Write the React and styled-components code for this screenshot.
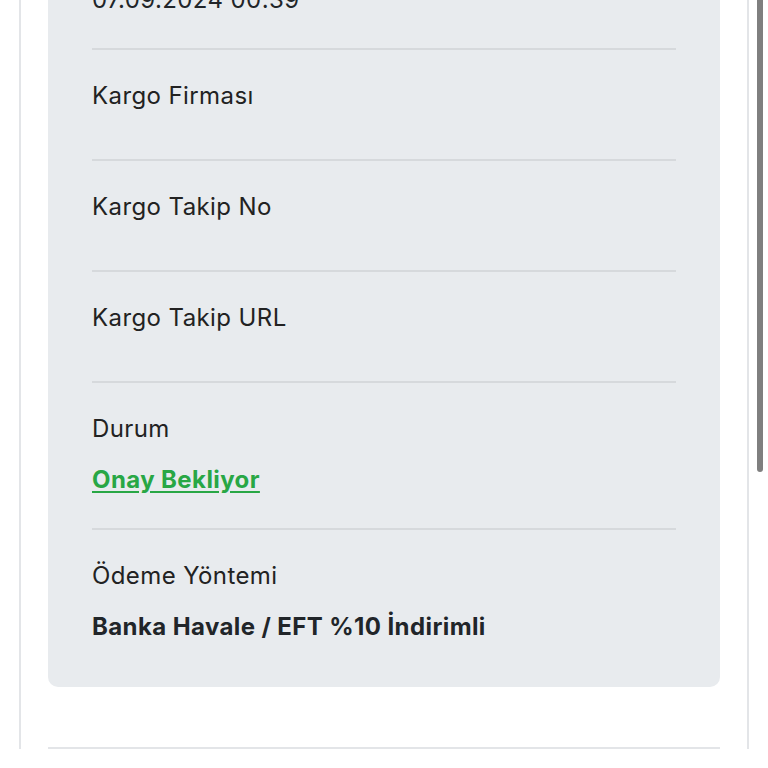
import React from 'react';
import styled, { createGlobalStyle } from 'styled-components';

// STYLES
const GlobalStyle = createGlobalStyle`
    html, body {
        margin: 0;
        padding: 0;
        background: #ffffff;
        overflow: hidden;
    }
    body {
        font-family: 'Inter', 'Noto Sans', sans-serif;
        color: #212529;
    }
`
const Page = styled.div`
    width: 768px;
    height: 768px;
    overflow: hidden;
    padding-left: 19px;
    box-sizing: border-box;
`
const Card = styled.div`
    width: 730px;
    box-sizing: border-box;
    border-left: 2px solid #e3e5e8;
    border-right: 2px solid #e3e5e8;
    padding: 0 27px;
    /* page is scrolled: the date row sits half above the viewport */
    margin-top: -99px;
`
const Panel = styled.div`
    background-color: #e8ebee;
    border-radius: 0 0 10px 10px;
    padding: 0 44px 12px;
`
const Row = styled.div`
    padding: 31px 0 33px;
    border-top: ${props => props.first ? 'none' : '2px solid #d6d9dc'};
    margin-top: ${props => props.first ? '2px' : '0'};
`
const Label = styled.div`
    font-size: 24px;
    line-height: 30px;
    font-weight: 400;
    letter-spacing: 0.4px;
    margin-bottom: 15px;
    color: #222222;
`
const Value = styled.div`
    padding-top: 6px;
    font-size: 24px;
    line-height: 30px;
    font-weight: ${props => props.plain ? 400 : 700};
    letter-spacing: 0.4px;
    color: #212529;

    a {
        color: #28a745;
        text-decoration: underline;
        text-underline-offset: 3px;
    }
`
const Divider = styled.div`
    margin-top: 60px;
    height: 2px;
    background-color: #e3e5e8;
`
const Thumb = styled.div`
    position: fixed;
    top: 0;
    right: 5px;
    width: 6px;
    height: 472px;
    border-radius: 0 0 3px 3px;
    background-color: #7f7f7f;
`

const rows = [
    { label: 'Sipariş Tarihi', value: '07.09.2024 00:39', plain: true },
    { label: 'Kargo Firması' },
    { label: 'Kargo Takip No' },
    { label: 'Kargo Takip URL' },
    { label: 'Durum', value: 'Onay Bekliyor', link: true },
    { label: 'Ödeme Yöntemi', value: 'Banka Havale / EFT %10 İndirimli' },
]

export default function App() {
    return (
        <Page>
            <GlobalStyle />
            <Card>
                <Panel>
                    {rows.map((row, i) => (
                        <Row key={row.label} first={i === 0}>
                            <Label>{row.label}</Label>
                            {row.value && (
                                <Value plain={row.plain}>
                                    {row.link ? <a href="#">{row.value}</a> : row.value}
                                </Value>
                            )}
                        </Row>
                    ))}
                </Panel>
                <Divider />
            </Card>
            <Thumb />
        </Page>
    );
}
